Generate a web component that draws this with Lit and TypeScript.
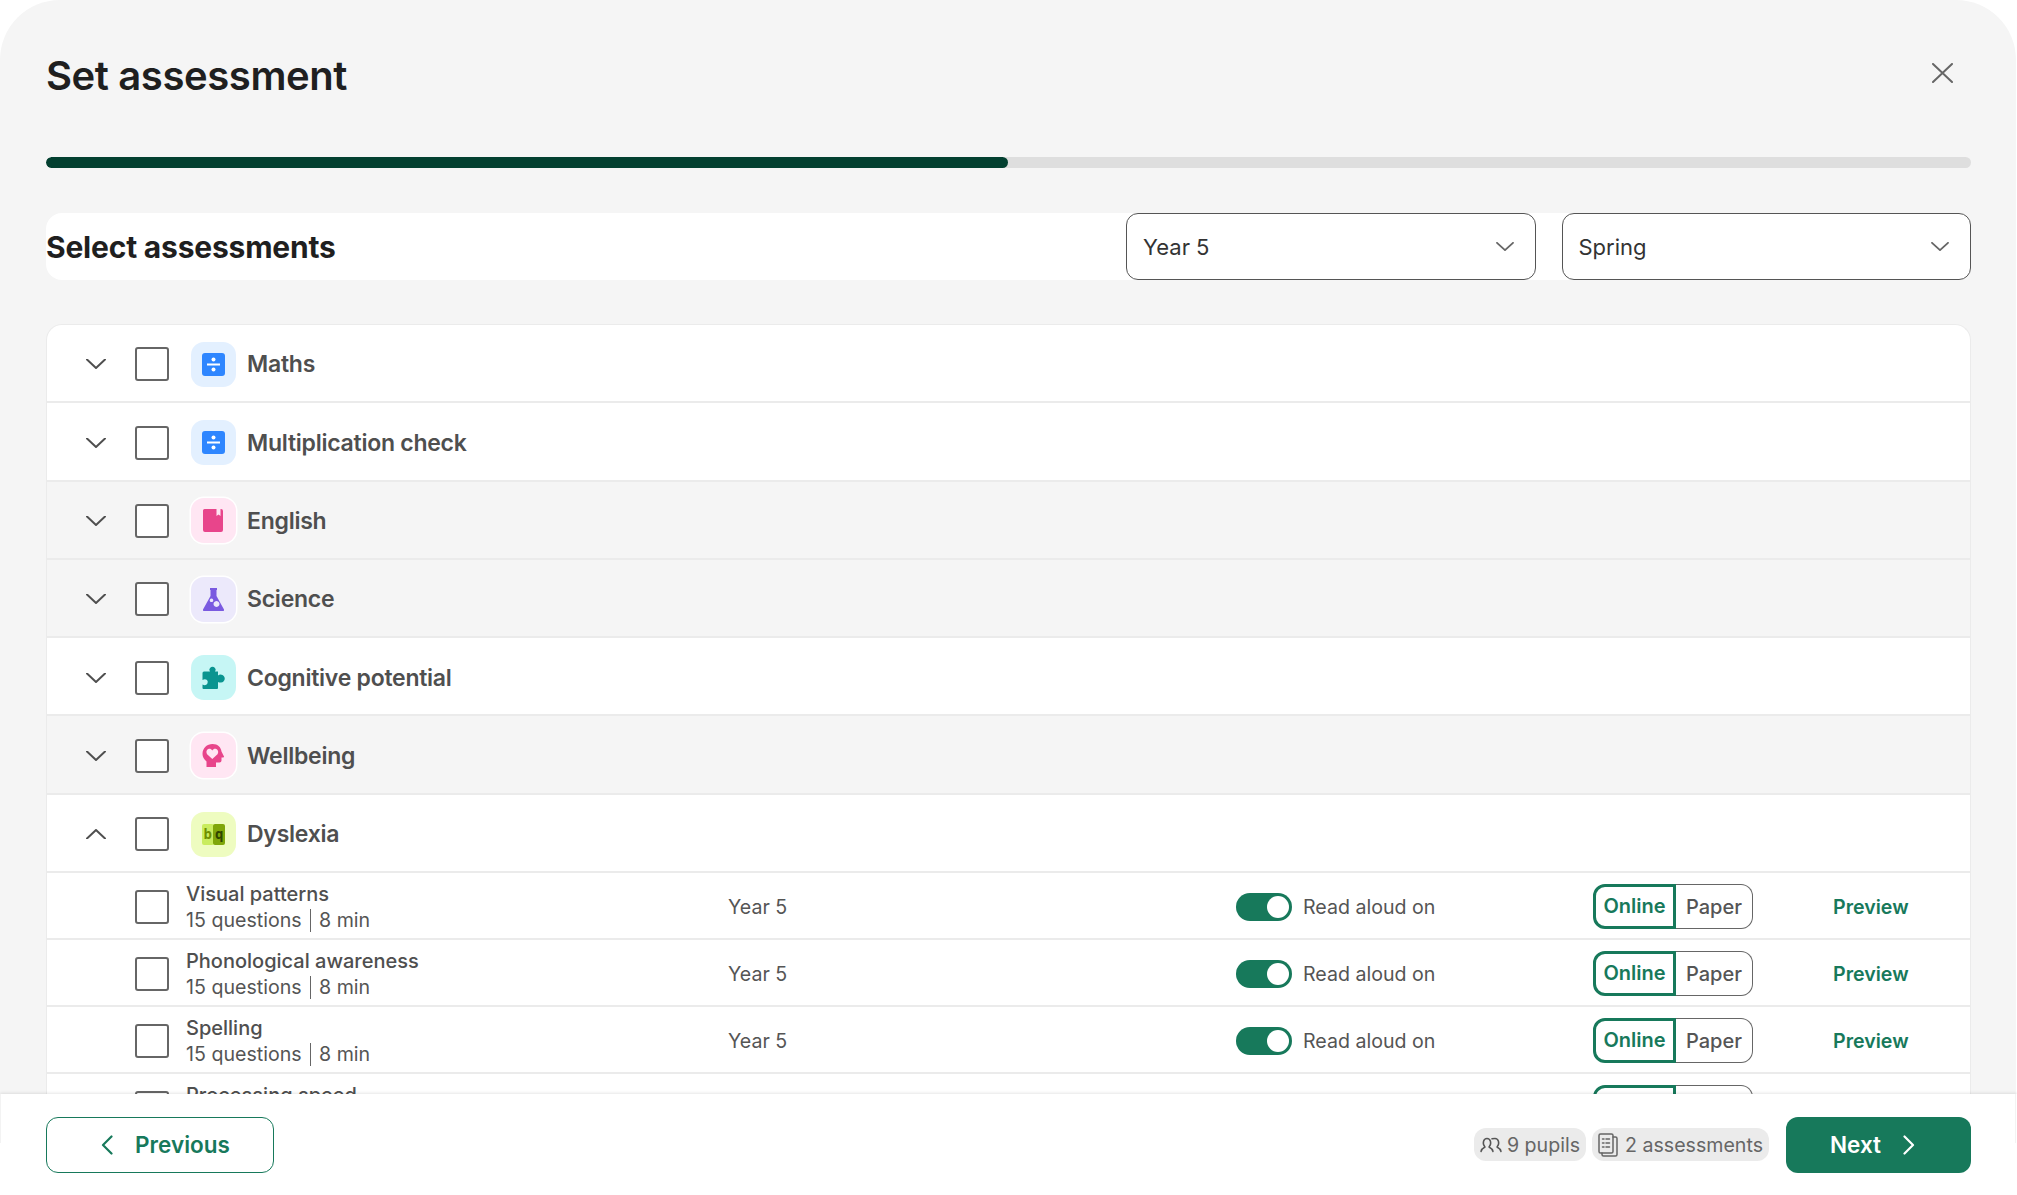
import { LitElement, html, css, svg } from "lit";
import { customElement } from "lit/decorators.js";

const chev = (up = false) => html`<svg class="chev" viewBox="0 0 20 10" fill="none" stroke="#4f4f4f" stroke-width="2" stroke-linecap="round" stroke-linejoin="round"><path d=${up ? "M1 9.5L10 1L19 9.5" : "M1 .5L10 9L19 .5"}></path></svg>`;

const divide = svg`<rect x="0" y="0" width="23" height="23" rx="3" fill="#2e86ff"/><rect x="5" y="10.500" width="13" height="2" fill="#fff"/><circle cx="11.500" cy="6.500" r="2" fill="#fff"/><circle cx="11.500" cy="16.500" r="2" fill="#fff"/>`;
const book = svg`<path d="M2.500 0H14.500V7L16.500 5.400L18.500 7V0H19A2 2 0 0 1 21 2V21A2 2 0 0 1 19 23H3A2 2 0 0 1 1 21V1.500A1.500 1.500 0 0 1 2.500 0Z" fill="#e8458b"/>`;
const flask = svg`<path fill-rule="evenodd" d="M8 0H15V2H14.500V8L22 21.500Q22.500 23 21 23H2Q.5 23 1 21.500L8.500 8V2H8ZM9.500 10.500a1.800 1.800 0 1 0 .01 0ZM14.500 13a3 3 0 1 0 .01 0Z" fill="#7a5ae0"/>`;
const puzzle = svg`<path d="M8 5.500Q6.500 3.800 8 2Q10.500 -.5 13 2Q14.500 3.800 13 5.500H16V9.500Q18 8 20.500 9Q23.500 11 22.500 14Q21 17 18.500 16.500Q17 16.500 16 16V22Q16 23 15 23H1.500Q.5 23 .5 22V18.500Q3.500 20 5.200 18Q6.500 15.500 5 14Q3 12.500 .5 14V7Q.5 5.500 2 5.500Z" fill="#0a9490"/>`;
const head = svg`<path fill-rule="evenodd" d="M10.500 0C16 0 19 3.500 19.500 7.500L22 12.500Q22.300 13.500 21 13.500H19.500V16.500Q19.500 18.500 17.500 18.500H14V23H4.500V17.500C2 15.500 .5 12.500 .5 10C.5 4 5 0 10.500 0ZM6.300 5C4.300 6 3.900 8.500 5.100 10.200L10.300 15L15.500 10.200C16.700 8.500 16.300 6 14.300 5C12.800 4.300 11.300 5 10.300 6.500C9.300 5 7.800 4.300 6.300 5Z" fill="#e8458b"/>`;
const bq = svg`<rect x="0" y="1" width="12" height="21" rx="2" fill="#c9ec5e"/><rect x="11" y="1" width="12" height="21" rx="2" fill="#7fa60a"/><text x="5.500" y="16" text-anchor="middle" class="bq" fill="#6f8f00">b</text><text x="17" y="16" text-anchor="middle" class="bq" fill="#2f4400">q</text>`;

type Subject = { name: string; bg: string; grey: boolean; icon: unknown; up?: boolean };
const subjects: Subject[] = [
  { name: "Maths", bg: "#e3f0ff", grey: false, icon: divide },
  { name: "Multiplication check", bg: "#e3f0ff", grey: false, icon: divide },
  { name: "English", bg: "#ffe6f3", grey: true, icon: book },
  { name: "Science", bg: "#ece9fb", grey: true, icon: flask },
  { name: "Cognitive potential", bg: "#c6f6f5", grey: false, icon: puzzle },
  { name: "Wellbeing", bg: "#ffe6f3", grey: true, icon: head },
  { name: "Dyslexia", bg: "#eefcc0", grey: false, icon: bq, up: true },
];
const tests = ["Visual patterns", "Phonological awareness", "Spelling", "Processing speed"];

@customElement("app-root")
export class AppRoot extends LitElement {
  static styles = css`
    :host { display: flex; flex-direction: column; height: 1195px; width: 2017px; overflow: hidden; background: #fff; font-family: Inter, "Noto Sans", sans-serif; color: #1f1f1f; }
    * { box-sizing: border-box; }
    .modal { flex: 1; min-height: 0; overflow: hidden; margin-right: 1px; padding: 44px 45px 0 46px; background: #f5f5f5; border-radius: 60px 60px 0 0; }
    .head { display: flex; align-items: center; justify-content: space-between; height: 64px; padding-right: 18px; }
    h1 { margin: 0; font-size: 40px; font-weight: 600; letter-spacing: -.4px; line-height: 64px; color: #1f1f1f; }
    .close { width: 21px; height: 20px; display: block; margin-bottom: 7px; }
    .track { margin-top: 49px; height: 11px; border-radius: 6px; background: #dedede; overflow: hidden; }
    .fill { width: 962px; height: 100%; border-radius: 6px; background: #034030; }
    .filters { margin-top: 45px; height: 67px; display: flex; align-items: stretch; gap: 26px; background: #fff; border-radius: 16px; }
    h2 { margin: 0; flex: 1; align-self: center; font-size: 30px; font-weight: 700; letter-spacing: -.2px; color: #1f1f1f; }
    .select { width: 409.500px; display: flex; align-items: center; justify-content: space-between; padding: 0 21px 0 16px; background: #fff; border: 1px solid #555; border-radius: 12px; font-size: 22px; color: #333; }
    .select svg { width: 18px; height: 9px; display: block; }
    .list { margin-top: 44px; background: #fff; border: 1px solid #ebebeb; border-bottom: 0; border-radius: 16px 16px 0 0; overflow: hidden; }
    .row { height: 78.3px; display: flex; align-items: center; padding: 2.500px 0 0 39px; border-bottom: 2px solid #ebebeb; font-size: 23px; font-weight: 600; letter-spacing: -.25px; color: #4f4f4f; }
    .row.grey { background: #f5f5f5; }
    .chev { width: 20px; height: 10px; display: block; margin-right: 29px; flex: none; }
    .box { width: 34px; height: 34px; flex: none; display: block; background: #fff; border: 2px solid #666; border-radius: 3px; }
    .tile { width: 45px; height: 45px; margin: 0 11px 0 22px; border-radius: 13px; display: flex; align-items: center; justify-content: center; flex: none; }
    .grey .tile { box-shadow: 0 0 0 1.500px #fff; }
    .tile svg { width: 23px; height: 23px; display: block; overflow: visible; }
    .bq { font: 700 14px "DejaVu Sans Mono", monospace; }
    .test { height: 67px; display: grid; grid-template-columns: 51px 542px 508px 357px 240px 1fr; align-items: center; padding: 2.500px 0 0 88px; border-bottom: 2px solid #ebebeb; font-size: 19.6px; color: #555; }
    .info { padding-top: 2px; }
    .name { font-size: 20px; font-weight: 550; color: #4f4f4f; line-height: 25px; }
    .sub { line-height: 25px; margin-top: 1px; display: flex; align-items: center; }
    .pipe { width: 1.500px; height: 23px; margin: 0 8px 0 8px; background: #666; }
    .aloud { display: flex; align-items: center; gap: 11px; }
    .toggle { width: 56px; height: 28px; padding: 3px; display: flex; justify-content: flex-end; border-radius: 14px; background: #17795b; }
    .knob { width: 22px; height: 22px; border-radius: 50%; background: #fff; }
    .seg { width: 160px; height: 45px; display: flex; border-radius: 12px; font-size: 20px; font-weight: 600; }
    .on { width: 83px; padding-bottom: 1px; border: 3px solid #17795b; border-radius: 12px 0 0 12px; color: #17795b; display: flex; align-items: center; justify-content: center; }
    .off { flex: 1; border: 1px solid #666; border-left: 0; border-radius: 0 12px 12px 0; color: #555; display: flex; align-items: center; justify-content: center; font-weight: 550; }
    .preview { color: #17795b; font-weight: 600; }
    .foot { position: relative; height: 101px; flex: none; display: flex; align-items: center; padding: 0 46px; background: #fff; box-shadow: 0 -1px 3px rgba(0, 0, 0, .1); }
    .foot::before, .foot::after { content: ""; position: absolute; top: 0; width: 1px; height: 49px; background: #f3f3f3; }
    .foot::before { left: 0; }
    .foot::after { right: 1px; }
    .btn { height: 56px; display: flex; align-items: center; justify-content: center; border-radius: 12px; font-size: 22.500px; font-weight: 600; }
    .prev { width: 228px; gap: 22px; border: 1.500px solid #17795b; color: #17795b; padding-left: 11px; }
    .next { width: 185px; gap: 22px; background: #17795b; color: #fff; padding-right: 12px; }
    .btn svg { width: 12px; height: 20px; display: block; }
    .spacer { flex: 1; }
    .pill { height: 33px; display: flex; align-items: center; gap: 5px; padding: 0 6px; border-radius: 12px; background: #ebebeb; font-size: 19.6px; color: #666; }
    .pill + .pill { margin-left: 6px; gap: 7px; margin-right: 17px; }
    .pill svg { display: block; }
  `;

  private test(name: string) {
    return html`<div class="test">
      <span class="box"></span>
      <div class="info"><div class="name">${name}</div><div class="sub">15 questions<span class="pipe"></span>8 min</div></div>
      <div>Year 5</div>
      <div class="aloud"><div class="toggle"><div class="knob"></div></div>Read aloud on</div>
      <div class="seg"><div class="on">Online</div><div class="off">Paper</div></div>
      <div class="preview">Preview</div>
    </div>`;
  }

  render() {
    const sel = (t: string) => html`<div class="select">${t}<svg viewBox="0 0 18 9" fill="none" stroke="#666" stroke-width="1.800" stroke-linecap="round" stroke-linejoin="round"><path d="M1 .8L9 8.200L17 .8"></path></svg></div>`;
    return html`
      <div class="modal">
        <div class="head">
          <h1>Set assessment</h1>
          <svg class="close" viewBox="0 0 21 20" fill="none" stroke="#666" stroke-width="2" stroke-linecap="round"><path d="M1 1L20 19M20 1L1 19"></path></svg>
        </div>
        <div class="track"><div class="fill"></div></div>
        <div class="filters"><h2>Select assessments</h2>${sel("Year 5")}${sel("Spring")}</div>
        <div class="list">
          ${subjects.map((s) => html`<div class="row ${s.grey ? "grey" : ""}">
            ${chev(s.up)}<span class="box"></span>
            <div class="tile" style="background:${s.bg}"><svg viewBox="0 0 23 23">${s.icon}</svg></div>
            ${s.name}
          </div>`)}
          ${tests.map((t) => this.test(t))}
        </div>
      </div>
      <div class="foot">
        <div class="btn prev"><svg viewBox="0 0 12 20" fill="none" stroke="#17795b" stroke-width="2.200" stroke-linecap="round" stroke-linejoin="round"><path d="M10.500 1.500L2 10L10.500 18.500"></path></svg>Previous</div>
        <div class="spacer"></div>
        <div class="pill">
          <svg width="22" height="16" viewBox="0 0 22 16" fill="none" stroke="#555" stroke-width="1.500" stroke-linecap="round" stroke-linejoin="round"><path d="M1 14.500C1.500 12 3.500 10.800 5 10C3.500 8.500 3 6.500 3.500 4.500C4 2.500 5.500 1.500 7 1.500C8.500 1.500 10 2.500 10.500 4.500C11 6.500 10.500 8.500 9 10C10.500 10.800 12.500 12 13 14.500"></path><path d="M12 1.700C12.800 1.500 14 1.500 15 1.500C16.500 1.500 18 2.500 18.500 4.500C19 6.500 18.500 8.500 17 10C18.500 10.800 20.500 12 21 14.500"></path></svg>
          9 pupils
        </div>
        <div class="pill">
          <svg width="20" height="24" viewBox="0 0 20 24" fill="none" stroke="#666" stroke-width="1.500" stroke-linecap="round"><rect x="1" y="1" width="14" height="19" rx="1.500"></rect><path d="M15 4H17.500A1.500 1.500 0 0 1 19 5.500V21.500A1.500 1.500 0 0 1 17.500 23H5.500A1.500 1.500 0 0 1 4 21.500V20M4.500 6H6M4.500 10H6M4.500 14H6M8 6H11.500M8 10H11.500M8 14H11.500"></path></svg>
          2 assessments
        </div>
        <div class="btn next">Next<svg viewBox="0 0 12 20" fill="none" stroke="#fff" stroke-width="2.200" stroke-linecap="round" stroke-linejoin="round"><path d="M1.500 1.500L10 10L1.500 18.500"></path></svg></div>
      </div>
    `;
  }
}
